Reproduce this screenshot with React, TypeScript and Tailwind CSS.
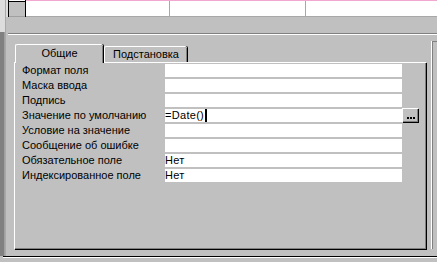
import React from 'react';

// Свойства поля таблицы (вкладка "Общие")
const rows: { label: string; value?: string; cursor?: boolean; button?: boolean }[] = [
  { label: 'Формат поля' },
  { label: 'Маска ввода' },
  { label: 'Подпись' },
  { label: 'Значение по умолчанию', value: '=Date()', cursor: true, button: true },
  { label: 'Условие на значение' },
  { label: 'Сообщение об ошибке' },
  { label: 'Обязательное поле', value: 'Нет' },
  { label: 'Индексированное поле', value: 'Нет' },
];

function PropertyRow({ row }: { row: (typeof rows)[number] }) {
  return (
    <div className="flex items-center h-[13px] mb-[2px]">
      <div className="w-[150px] pl-[7px] leading-none whitespace-nowrap">{row.label}</div>
      <div className="w-[237px] h-full bg-white flex items-center leading-none whitespace-nowrap">
        <span className="tracking-[0.3px]">{row.value}</span>
        {row.cursor && <span className="inline-block w-[2px] h-[13px] bg-black ml-[1px]" />}
      </div>
      {row.button && (
        <div className="w-[16px] h-[14px] -mt-[1px] bg-[#c0c0c0] border-t border-l border-white shadow-[inset_-1px_-1px_0_#808080,1px_1px_0_#000] flex items-end justify-center gap-[1px] pb-[3px]">
          <span className="w-[2px] h-[2px] bg-black" />
          <span className="w-[2px] h-[2px] bg-black" />
          <span className="w-[2px] h-[2px] bg-black" />
        </div>
      )}
    </div>
  );
}

export default function App() {
  return (
    <div
      className="w-[437px] h-[262px] bg-[#c0c0c0] flex flex-col overflow-hidden text-[11px] text-black"
      style={{ fontFamily: '"Liberation Sans", Arial, sans-serif' }}
    >
      <div className="flex h-[256px]">
        {/* левая полоса */}
        <div className="w-[5px] flex flex-col">
          <div className="h-[32px] bg-[#dcdcdc]" />
          <div className="flex-1 bg-[#808080] border-r border-[#a0a0a0]" />
        </div>
        <div className="w-[1px] bg-[#a8a8a8]" />

        <div className="flex-1 flex flex-col min-w-0">
          {/* строка таблицы сверху */}
          <div className="flex h-[17px]">
            <div className="w-[2px] bg-[#dcdcdc]" />
            <div className="w-[18px] flex flex-col border-l border-r border-black">
              <div className="h-[1px] bg-white" />
              <div className="h-[1px] bg-black" />
              <div className="flex-1 bg-[#c0c0c0] border-b border-[#a0a0a0]" />
            </div>
            <div className="flex-1 flex flex-col">
              <div className="h-[1px] bg-[#f0a8d0]" />
              <div className="flex-1 flex bg-white border-b border-[#a8a8a8]">
                <div className="w-[144px] border-r border-[#a8a8a8]" />
                <div className="w-[136px] border-r border-[#a8a8a8]" />
                <div className="flex-1" />
              </div>
            </div>
          </div>

          <div className="h-[16px]" />
          <div className="h-[1px] ml-[2px] bg-[#808080]" />
          <div className="h-[1px] ml-[2px] bg-white" />
          <div className="h-[6px]" />

          <div className="flex flex-1">
            <div className="w-[8px]" />
            {/* элемент вкладок */}
            <div className="w-[412px] flex flex-col pt-[2px]">
              <div className="flex h-[19px] items-end pl-[1px]">
                <div className="relative z-10 w-[88px] h-[19px] -mb-[1px] bg-[#c0c0c0] border-t border-l border-white rounded-tl-[2px] rounded-tr-[2px] shadow-[inset_-1px_0_0_#808080,1px_0_0_#000] flex items-center justify-center pb-[1px]">
                  Общие
                </div>
                <div className="w-[83px] h-[16px] ml-[1px] bg-[#c0c0c0] border-t border-l border-white rounded-tl-[2px] rounded-tr-[2px] shadow-[inset_-1px_0_0_#808080,1px_0_0_#000] flex items-center justify-center pb-[1px]">
                  Подстановка
                </div>
              </div>
              <div className="h-[187px] bg-[#c0c0c0] border-t border-l border-white shadow-[inset_-1px_-1px_0_#808080,1px_1px_0_#000] pt-[1px]">
                {rows.map((row) => (
                  <PropertyRow key={row.label} row={row} />
                ))}
              </div>
            </div>
            {/* правый край */}
            <div className="flex-1 flex pl-[6px]">
              <div className="flex-1 border-t border-l border-[#808080] shadow-[-1px_0_0_#ffffff]" />
            </div>
          </div>
          <div className="h-[7px]" />
        </div>
      </div>
      <div className="h-[1px] ml-[3px] bg-black" />
      <div className="h-[1px] ml-[3px] bg-white" />
      <div className="flex-1" />
    </div>
  );
}
